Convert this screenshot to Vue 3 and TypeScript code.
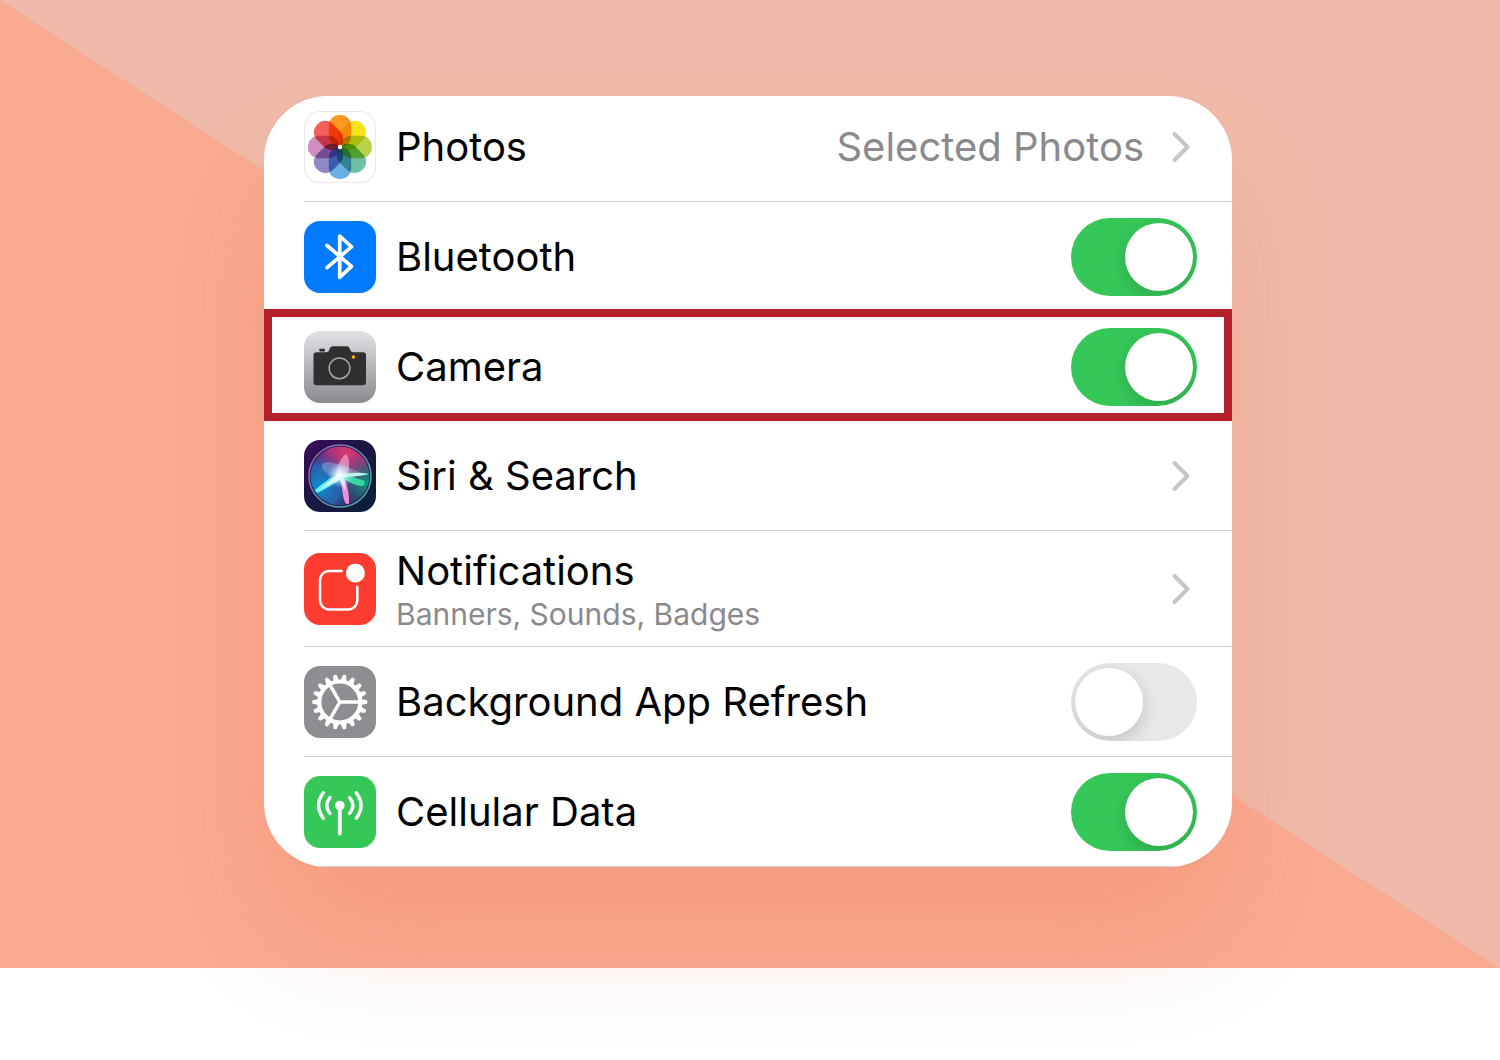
<script setup lang="ts">
import { ref } from 'vue'

type IconName = 'photos' | 'bluetooth' | 'camera' | 'siri' | 'notifications' | 'refresh' | 'cellular'

interface Setting {
  icon: IconName
  label: string
  detail?: string
  value?: string
  on?: boolean
  highlighted?: boolean
}

const settings = ref<Setting[]>([
  { icon: 'photos', label: 'Photos', value: 'Selected Photos' },
  { icon: 'bluetooth', label: 'Bluetooth', on: true },
  { icon: 'camera', label: 'Camera', on: true, highlighted: true },
  { icon: 'siri', label: 'Siri & Search' },
  { icon: 'notifications', label: 'Notifications', detail: 'Banners, Sounds, Badges' },
  { icon: 'refresh', label: 'Background App Refresh', on: false },
  { icon: 'cellular', label: 'Cellular Data', on: true },
])

const petals = ['#fb9a1e', '#f6e11a', '#b5d44a', '#6fc0a0', '#6aaee4', '#8f88c4', '#d08fc0', '#f4605a']
const teeth = Array.from({ length: 18 }, (_, i) => i * 20)
</script>

<template>
  <main class="page">
    <div class="stage">
      <section class="card">
        <ul class="list">
          <li
            v-for="item in settings"
            :key="item.icon"
            class="item"
            :class="{ highlighted: item.highlighted, tall: item.detail }"
          >
            <component
              :is="item.on === undefined ? 'a' : 'label'"
              class="row"
              :href="item.on === undefined ? '#' + item.icon : undefined"
              :for="item.on === undefined ? undefined : 'switch-' + item.icon"
            >
              <svg class="icon" :class="item.icon" viewBox="0 0 72 72" aria-hidden="true">
                <g v-if="item.icon === 'photos'">
                  <rect
                    v-for="(color, i) in petals"
                    :key="color"
                    class="petal"
                    x="24.8"
                    y="4"
                    width="22.4"
                    height="31.5"
                    rx="10.6"
                    :fill="color"
                    :transform="`rotate(${i * 45} 36 36)`"
                  />
                  <circle cx="36" cy="36" r="2.2" fill="#fff" />
                </g>
                <path
                  v-else-if="item.icon === 'bluetooth'"
                  d="M23 24.500 47.500 45.400 35.700 56.300V15L47.500 25.800 23 46.600"
                  fill="none"
                  stroke="#fff"
                  stroke-width="3.7"
                  stroke-linecap="round"
                  stroke-linejoin="round"
                />
                <g v-else-if="item.icon === 'camera'">
                  <rect x="15.2" y="17.800" width="5.8" height="2.6" rx="1" fill="#303032" />
                  <path
                    d="M12.5 21.300H22c2.400 0 2.800-1 3.500-3 .7-2.200 1.500-3 3.500-3h13.500c2 0 2.800.8 3.500 3 .7 2 1.200 3 3.500 3h9.500a3 3 0 0 1 3 3v27a3 3 0 0 1-3 3h-46.500a3 3 0 0 1-3-3v-27a3 3 0 0 1 3-3z"
                    fill="#303032"
                  />
                  <circle cx="35.500" cy="37.300" r="10.400" fill="none" stroke="#a5a5a7" stroke-width="1.500" />
                  <circle cx="49.400" cy="26" r="1.700" fill="#fbc00d" />
                </g>
                <g v-else-if="item.icon === 'siri'">
                  <defs>
                    <linearGradient id="siri-bg" x1="0" y1="0" x2="1" y2="1">
                      <stop offset="0" stop-color="#3d0a5c" />
                      <stop offset=".45" stop-color="#1c1645" />
                      <stop offset="1" stop-color="#0a2038" />
                    </linearGradient>
                    <radialGradient id="siri-pink" cx=".62" cy=".12" r=".66">
                      <stop offset="0" stop-color="#d93a70" />
                      <stop offset=".5" stop-color="#b53280" stop-opacity=".85" />
                      <stop offset="1" stop-color="#6b2a8a" stop-opacity="0" />
                    </radialGradient>
                    <radialGradient id="siri-blue" cx=".15" cy=".68" r=".6">
                      <stop offset="0" stop-color="#0a90cf" />
                      <stop offset=".6" stop-color="#226fc0" stop-opacity=".75" />
                      <stop offset="1" stop-color="#3d3a91" stop-opacity="0" />
                    </radialGradient>
                    <radialGradient id="siri-green" cx=".95" cy=".62" r=".5">
                      <stop offset="0" stop-color="#12967f" />
                      <stop offset="1" stop-color="#1b6f78" stop-opacity="0" />
                    </radialGradient>
                    <radialGradient id="siri-glow">
                      <stop offset="0" stop-color="#fff" />
                      <stop offset=".3" stop-color="#e9fbff" stop-opacity=".8" />
                      <stop offset="1" stop-color="#9be8f5" stop-opacity="0" />
                    </radialGradient>
                    <linearGradient id="siri-ring" x1="0" y1="0" x2="1" y2="1">
                      <stop offset="0" stop-color="#8d63b5" />
                      <stop offset=".5" stop-color="#6d8dab" />
                      <stop offset="1" stop-color="#4fb6b2" />
                    </linearGradient>
                  </defs>
                  <rect width="72" height="72" fill="url(#siri-bg)" />
                  <circle cx="36" cy="36" r="29.500" fill="#3a2a66" />
                  <circle cx="36" cy="36" r="29.500" fill="url(#siri-pink)" />
                  <circle cx="36" cy="36" r="29.500" fill="url(#siri-blue)" />
                  <circle cx="36" cy="36" r="29.500" fill="url(#siri-green)" />
                  <path d="M35 36C24 36 18 31 18 26c0-5 9-4 15-2 9 3 20 6 27 11-9-1-17 0-25 1z" fill="#a3a9e0" opacity=".45" />
                  <path d="M32 36c0-9 6-20 10-22 4 4 4 13 1 24z" fill="#f6b7dc" opacity=".6" />
                  <path d="M34 34C25 38 17 45 11 50l2 3c9-4 17-9 26-15z" fill="#5ff0f5" />
                  <path d="M35 35c-8 4-12 9-20 15 9-5 15-8 22-11z" fill="#fff" />
                  <path d="M34 36c5 9 4 20 7 26 1 3 5 3 4-1 0-9-2-17-6-27z" fill="#f08fd6" />
                  <path d="M34 35c2 6 5 10 7 16 0-7 0-11-2-17z" fill="#fff" opacity=".8" />
                  <path d="M35 34c9 0 15 4 24 6 3 1 2 6-1 6-9-1-15-5-22-9z" fill="#35d8a4" />
                  <path d="M33 36c10-4 22-4 32-2-9 3-20 2-28 4z" fill="#b4f6ea" />
                  <circle cx="36" cy="35" r="13" fill="url(#siri-glow)" />
                  <circle cx="36" cy="36" r="31" fill="none" stroke="url(#siri-ring)" stroke-width="1.500" />
                </g>
                <g v-else-if="item.icon === 'notifications'">
                  <path
                    d="M38.700 18H25a9 9 0 0 0-9 9v20.500a9 9 0 0 0 9 9h19.300a9 9 0 0 0 9-9V32.700"
                    fill="none"
                    stroke="#fff"
                    stroke-width="2.500"
                  />
                  <circle cx="51.400" cy="20" r="9.500" fill="#fff" />
                </g>
                <g v-else-if="item.icon === 'refresh'">
                  <circle cx="35.800" cy="36" r="20.500" fill="none" stroke="#fff" stroke-width="4.200" />
                  <path
                    v-for="angle in teeth"
                    :key="angle"
                    d="M57 33 63 34.300q1 1.700 0 3.400L57 39z"
                    fill="#fff"
                    :transform="`rotate(${angle} 35.8 36)`"
                  />
                  <path d="M25.800 18.700 35.800 36 25.800 53.300M35.800 36h19" fill="none" stroke="#fff" stroke-width="3.400" />
                </g>
                <g v-else fill="none" stroke="#fff" stroke-width="3.400" stroke-linecap="round">
                  <circle cx="35.800" cy="29.500" r="4.800" fill="#fff" stroke="none" />
                  <path d="M35.800 30v27.500" stroke-width="3.800" />
                  <path d="M26 21.500q-6.600 8 0 16M45.600 21.500q6.600 8 0 16M19.300 16.800q-9.600 12.700 0 25.400M52.300 16.800q9.600 12.700 0 25.400" />
                </g>
              </svg>

              <span class="text">
                <span class="label">{{ item.label }}</span>
                <span v-if="item.detail" class="detail">{{ item.detail }}</span>
              </span>
              <span v-if="item.value" class="value">{{ item.value }}</span>

              <input
                v-if="item.on !== undefined"
                :id="'switch-' + item.icon"
                v-model="item.on"
                class="switch"
                type="checkbox"
                role="switch"
              />
              <svg v-else class="chevron" viewBox="0 0 20 32" aria-hidden="true">
                <path d="M3.500 3 16.500 16 3.500 29" />
              </svg>
            </component>
          </li>
        </ul>
      </section>
    </div>
  </main>
</template>

<style>
body {
  margin: 0;
  background: #fff;
}
</style>

<style scoped>
.page {
  min-height: 100vh;
  overflow: hidden;
}

.stage {
  padding: 96px 268px 101px 264px;
  background: linear-gradient(to top right, #f9ab91 50%, #efbaa9 50%);
  font-family: Inter, "Liberation Sans", sans-serif;
}

.card {
  overflow: hidden;
  border-radius: 64px;
  background: #fff;
  box-shadow: 0 76px 120px -18px rgba(234, 91, 60, 0.24);
}

.list {
  margin: -4px 0 0;
  padding: 0;
  list-style: none;
}

.item {
  position: relative;
  padding-left: 40px;
}

.row {
  box-sizing: border-box;
  display: flex;
  align-items: center;
  height: 110px;
  padding: 1px 35px 0 0;
  border-bottom: 1px solid #cdcdd0;
  color: #000;
  text-decoration: none;
}

.tall .row {
  height: 116px;
}

.item:last-child {
  padding-left: 0;
}

.item:last-child .row {
  padding-left: 40px;
}

.highlighted .row {
  height: 109px;
  padding-top: 2px;
}

.highlighted::after {
  content: "";
  position: absolute;
  inset: -3px 0 0;
  border: 8px solid #b5202b;
  pointer-events: none;
}

.icon {
  flex: none;
  width: 72px;
  height: 72px;
  margin-right: 20px;
  border-radius: 16px;
  isolation: isolate;
}

.photos {
  background: #fff;
  box-shadow: inset 0 0 0 1px #e9e9ea;
}

.petal {
  mix-blend-mode: multiply;
}

.bluetooth {
  background: #007aff;
}

.camera {
  background: linear-gradient(#e2e1e6, #8b8a90);
}

.notifications {
  background: #ff3c30;
}

.refresh {
  background: #8e8d92;
}

.cellular {
  background: #36c759;
}

.text {
  display: flex;
  flex: 1;
  flex-direction: column;
}

.label,
.value {
  font-size: 40px;
  line-height: 50px;
  white-space: nowrap;
}

.value {
  color: #8a8a8e;
}

.detail {
  color: #8a8a8e;
  font-size: 30px;
  line-height: 36px;
}

.chevron {
  flex: none;
  width: 20px;
  height: 32px;
  margin: 0 6px 0 27px;
  fill: none;
  stroke: #c5c5c7;
  stroke-width: 4;
  stroke-linecap: round;
  stroke-linejoin: round;
}

.switch {
  appearance: none;
  box-sizing: border-box;
  flex: none;
  overflow: hidden;
  width: 126px;
  height: 78px;
  margin: 0;
  padding: 5px 4px;
  border-radius: 39px;
  background: #e8e8ea;
}

.switch::before {
  content: "";
  display: block;
  width: 68px;
  height: 68px;
  border-radius: 50%;
  background: #fff;
  box-shadow: 0 6px 18px rgba(0, 0, 0, 0.16);
}

.switch:checked {
  background: #36c759;
}

.switch:checked::before {
  margin-left: auto;
}
</style>
